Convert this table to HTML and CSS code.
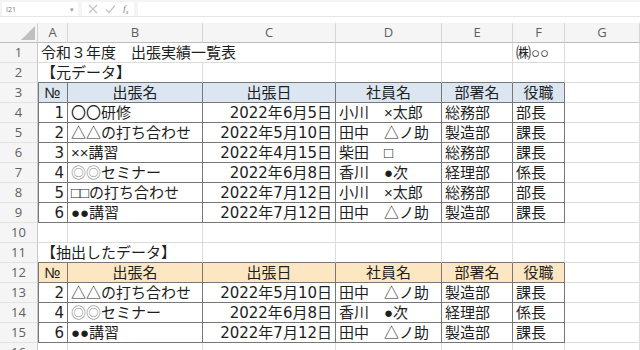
FILE: index.html
```html
<!DOCTYPE html>
<html lang="ja">
<head>
<meta charset="utf-8">
<link rel="stylesheet" href="styles.css">
</head>
<body>
<div class="fbar">
  <div class="namebox"><span class="nb-text">I21</span><span class="caret">▾</span></div>
  <div class="fbtns">
    <svg class="ico" width="10" height="10" viewBox="0 0 10 10"><path d="M1 1L9 9M9 1L1 9" stroke="#c4c4c4" stroke-width="1.2" fill="none"/></svg>
    <svg class="ico" width="11" height="10" viewBox="0 0 11 10"><path d="M1 5.5L4 8.5L10 1.5" stroke="#c4c4c4" stroke-width="1.2" fill="none"/></svg>
    <span class="fx">f<sub>x</sub></span>
  </div>
  <div class="finput"></div>
</div>
<div class="sheet">
  <div class="c corner"><svg width="38" height="20" viewBox="0 0 38 20"><path d="M35 3L35 17L21 17Z" fill="#bfbfbf"/></svg></div>
  <div class="c ch">A</div><div class="c ch">B</div><div class="c ch">C</div><div class="c ch">D</div><div class="c ch">E</div><div class="c ch">F</div><div class="c ch">G</div>

  <div class="c rh">1</div>
  <div class="c span3">令和３年度　出張実績一覧表</div>
  <div class="c"></div><div class="c"></div>
  <div class="c">㈱○○</div>
  <div class="c"></div>

  <div class="c rh">2</div>
  <div class="c span2 top">【元データ】</div>
  <div class="c top"></div><div class="c top"></div><div class="c top"></div><div class="c top"></div>
  <div class="c"></div>

  <div class="c rh">3</div>
  <div class="c t tl hb ctr">№</div>
  <div class="c t hb ctr">出張名</div>
  <div class="c t hb ctr">出張日</div>
  <div class="c t hb ctr">社員名</div>
  <div class="c t hb ctr">部署名</div>
  <div class="c t hb ctr">役職</div>
  <div class="c"></div>

  <div class="c rh">4</div>
  <div class="c t tl r"><span class="n">1</span></div>
  <div class="c t">〇〇研修</div>
  <div class="c t r"><span class="n">2022</span>年<span class="n">6</span>月<span class="n">5</span>日</div>
  <div class="c t">小川　×太郎</div>
  <div class="c t">総務部</div>
  <div class="c t">部長</div>
  <div class="c"></div>

  <div class="c rh">5</div>
  <div class="c t tl r"><span class="n">2</span></div>
  <div class="c t">△△の打ち合わせ</div>
  <div class="c t r"><span class="n">2022</span>年<span class="n">5</span>月<span class="n">10</span>日</div>
  <div class="c t">田中　△ノ助</div>
  <div class="c t">製造部</div>
  <div class="c t">課長</div>
  <div class="c"></div>

  <div class="c rh">6</div>
  <div class="c t tl r"><span class="n">3</span></div>
  <div class="c t">××講習</div>
  <div class="c t r"><span class="n">2022</span>年<span class="n">4</span>月<span class="n">15</span>日</div>
  <div class="c t">柴田　□</div>
  <div class="c t">総務部</div>
  <div class="c t">課長</div>
  <div class="c"></div>

  <div class="c rh">7</div>
  <div class="c t tl r"><span class="n">4</span></div>
  <div class="c t"><span class="g">◎◎</span>セミナー</div>
  <div class="c t r"><span class="n">2022</span>年<span class="n">6</span>月<span class="n">8</span>日</div>
  <div class="c t">香川　●次</div>
  <div class="c t">経理部</div>
  <div class="c t">係長</div>
  <div class="c"></div>

  <div class="c rh">8</div>
  <div class="c t tl r"><span class="n">5</span></div>
  <div class="c t">□□の打ち合わせ</div>
  <div class="c t r"><span class="n">2022</span>年<span class="n">7</span>月<span class="n">12</span>日</div>
  <div class="c t">小川　×太郎</div>
  <div class="c t">総務部</div>
  <div class="c t">部長</div>
  <div class="c"></div>

  <div class="c rh">9</div>
  <div class="c t tl r"><span class="n">6</span></div>
  <div class="c t">●●講習</div>
  <div class="c t r"><span class="n">2022</span>年<span class="n">7</span>月<span class="n">12</span>日</div>
  <div class="c t">田中　△ノ助</div>
  <div class="c t">製造部</div>
  <div class="c t">課長</div>
  <div class="c"></div>

  <div class="c rh">10</div>
  <div class="c"></div><div class="c"></div><div class="c"></div><div class="c"></div><div class="c"></div><div class="c"></div><div class="c"></div>

  <div class="c rh">11</div>
  <div class="c span2 top">【抽出したデータ】</div>
  <div class="c top"></div><div class="c top"></div><div class="c top"></div><div class="c top"></div>
  <div class="c"></div>

  <div class="c rh">12</div>
  <div class="c t tl ho ctr">№</div>
  <div class="c t ho ctr">出張名</div>
  <div class="c t ho ctr">出張日</div>
  <div class="c t ho ctr">社員名</div>
  <div class="c t ho ctr">部署名</div>
  <div class="c t ho ctr">役職</div>
  <div class="c"></div>

  <div class="c rh">13</div>
  <div class="c t tl r"><span class="n">2</span></div>
  <div class="c t">△△の打ち合わせ</div>
  <div class="c t r"><span class="n">2022</span>年<span class="n">5</span>月<span class="n">10</span>日</div>
  <div class="c t">田中　△ノ助</div>
  <div class="c t">製造部</div>
  <div class="c t">課長</div>
  <div class="c"></div>

  <div class="c rh">14</div>
  <div class="c t tl r"><span class="n">4</span></div>
  <div class="c t"><span class="g">◎◎</span>セミナー</div>
  <div class="c t r"><span class="n">2022</span>年<span class="n">6</span>月<span class="n">8</span>日</div>
  <div class="c t">香川　●次</div>
  <div class="c t">経理部</div>
  <div class="c t">係長</div>
  <div class="c"></div>

  <div class="c rh">15</div>
  <div class="c t tl r"><span class="n">6</span></div>
  <div class="c t">●●講習</div>
  <div class="c t r"><span class="n">2022</span>年<span class="n">7</span>月<span class="n">12</span>日</div>
  <div class="c t">田中　△ノ助</div>
  <div class="c t">製造部</div>
  <div class="c t">課長</div>
  <div class="c"></div>

  <div class="c rh">16</div>
  <div class="c"></div><div class="c"></div><div class="c"></div><div class="c"></div><div class="c"></div><div class="c"></div><div class="c"></div>
</div>
</body>
</html>
```
FILE: styles.css
```css
html, body {
  margin: 0;
  padding: 0;
  background: #ffffff;
  overflow: hidden;
  width: 640px;
  height: 350px;
}
body {
  font-family: "Liberation Sans", "Noto Sans CJK JP", sans-serif;
  color: #1e1e1e;
}
.fbar {
  height: 17px;
  display: flex;
  align-items: stretch;
  gap: 4px;
  padding: 2px 0 0 2px;
  box-sizing: border-box;
  background: #f4f4f4;
  margin-bottom: 6px;
  border-bottom: 1px solid #e6e6e6;
}
.namebox {
  width: 76px;
  background: #ffffff;
  display: flex;
  align-items: center;
  justify-content: space-between;
  padding: 0 4px 0 4px;
  box-sizing: border-box;
  font-family: "Open Sans", sans-serif;
  font-size: 7px;
  color: #777;
}
.caret {
  font-size: 7px;
  color: #999;
}
.fbtns {
  width: 52px;
  background: #ffffff;
  display: flex;
  align-items: center;
  justify-content: space-around;
  padding: 0 2px;
  box-sizing: border-box;
}
.fx {
  font-family: "Liberation Serif", serif;
  font-style: italic;
  font-size: 9px;
  color: #777;
}
.fx sub {
  font-size: 6px;
}
.finput {
  flex: 1;
  background: #ffffff;
}
.sheet {
  display: grid;
  grid-template-columns: 38px 30px 135px 133px 106px 71px 52px 1fr;
  grid-auto-rows: 20px;
}
.c {
  box-sizing: border-box;
  border-right: 1px solid #dcdcdc;
  border-bottom: 1px solid #dcdcdc;
  padding: 0 3px;
  white-space: nowrap;
  overflow: hidden;
  font-size: 15px;
  line-height: 19px;
}
.corner {
  padding: 0;
  background: #f5f5f5;
  border-right-color: #cfcfcf;
  border-bottom-color: #bdbdbd;
}
.corner svg {
  display: block;
}
.ch {
  background: #f5f5f5;
  text-align: center;
  font-family: "Open Sans", sans-serif;
  font-size: 13px;
  color: #5f5f5f;
  border-right-color: #d6d6d6;
  border-bottom-color: #bdbdbd;
}
.rh {
  background: #f5f5f5;
  text-align: center;
  font-family: "Open Sans", sans-serif;
  font-size: 13px;
  color: #5f5f5f;
  border-right-color: #c8c8c8;
  border-bottom-color: #e2e2e2;
}
.span3 {
  grid-column: span 3;
}
.span2 {
  grid-column: span 2;
}
.top {
  border-bottom-color: #777777;
}
.t {
  border-right-color: #777777;
  border-bottom-color: #777777;
}
.tl {
  box-shadow: inset 1px 0 0 #777777;
}
.hb {
  background: #dce6f1;
}
.ho {
  background: #fce7c2;
}
.ctr {
  text-align: center;
}
.r {
  text-align: right;
}
.n {
  font-family: "DejaVu Sans", sans-serif;
  font-size: 15px;
}
.g {
  color: #8a8a8a;
}
```
